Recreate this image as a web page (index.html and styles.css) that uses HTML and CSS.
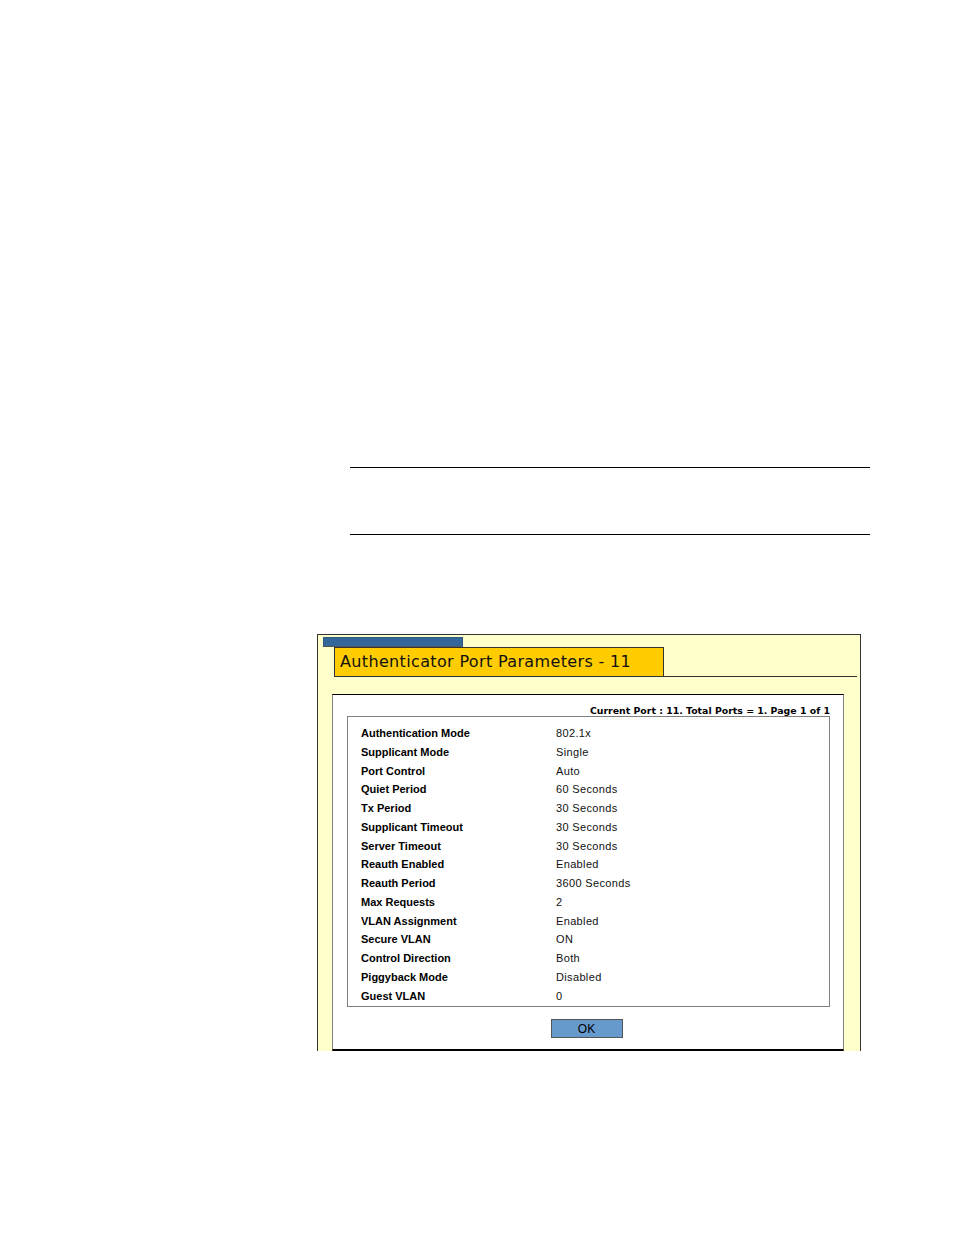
FILE: index.html
```html
<!DOCTYPE html>
<html>
<head>
<meta charset="utf-8">
<link rel="stylesheet" href="styles.css">
</head>
<body>
<div class="rules">
  <div class="rule-box"></div>
</div>
<div class="frame">
  <div class="tab"></div>
  <div class="header">
    <div class="title">Authenticator Port Parameters - 11</div>
  </div>
  <div class="panel">
    <div class="status">Current Port : 11. Total Ports = 1. Page 1 of 1</div>
    <div class="params">
      <div class="row"><span class="label">Authentication Mode</span><span class="value">802.1x</span></div>
      <div class="row"><span class="label">Supplicant Mode</span><span class="value">Single</span></div>
      <div class="row"><span class="label">Port Control</span><span class="value">Auto</span></div>
      <div class="row"><span class="label">Quiet Period</span><span class="value">60 Seconds</span></div>
      <div class="row"><span class="label">Tx Period</span><span class="value">30 Seconds</span></div>
      <div class="row"><span class="label">Supplicant Timeout</span><span class="value">30 Seconds</span></div>
      <div class="row"><span class="label">Server Timeout</span><span class="value">30 Seconds</span></div>
      <div class="row"><span class="label">Reauth Enabled</span><span class="value">Enabled</span></div>
      <div class="row"><span class="label">Reauth Period</span><span class="value">3600 Seconds</span></div>
      <div class="row"><span class="label">Max Requests</span><span class="value">2</span></div>
      <div class="row"><span class="label">VLAN Assignment</span><span class="value">Enabled</span></div>
      <div class="row"><span class="label">Secure VLAN</span><span class="value">ON</span></div>
      <div class="row"><span class="label">Control Direction</span><span class="value">Both</span></div>
      <div class="row"><span class="label">Piggyback Mode</span><span class="value">Disabled</span></div>
      <div class="row"><span class="label">Guest VLAN</span><span class="value">0</span></div>
    </div>
    <div class="actions"><button class="ok">OK</button></div>
  </div>
</div>
</body>
</html>
```

FILE: styles.css
```css
html, body {
  margin: 0;
  padding: 0;
  background: #ffffff;
}
body {
  font-family: "Liberation Sans", Arial, sans-serif;
  color: #000;
}
.rules {
  padding-top: 467px;
  margin-left: 350px;
  width: 520px;
}
.rule-box {
  border-top: 1px solid #000;
  border-bottom: 1px solid #000;
  height: 66px;
}
.frame {
  margin-top: 99px;
  margin-left: 317px;
  width: 542px;
  border: 1px solid #333;
  border-bottom: none;
  background: #ffffcc;
  display: flex;
  flex-direction: column;
}
.tab {
  margin-top: 2px;
  margin-left: 5px;
  width: 140px;
  height: 10px;
  background: #336699;
  box-sizing: border-box;
  border: 1px solid #2d5a86;
  border-bottom-color: #555;
}
.header {
  margin-left: 16px;
  width: 523px;
  border-bottom: 1px solid #333;
  display: flex;
}
.title {
  box-sizing: border-box;
  width: 330px;
  height: 29px;
  background: #ffcc00;
  border: 1px solid #333;
  border-bottom: none;
  font-family: "DejaVu Sans", Verdana, sans-serif;
  font-size: 16px;
  letter-spacing: 0.35px;
  line-height: 28px;
  padding-left: 5px;
  color: #111;
}
.panel {
  position: relative;
  margin-top: 17px;
  margin-left: 14px;
  width: 512px;
  box-sizing: border-box;
  background: #ffffff;
  border-top: 1px solid #000;
  border-left: 1px solid #808080;
  border-right: 1px solid #808080;
  border-bottom: 2px solid #000;
  display: flex;
  flex-direction: column;
}
.panel::after {
  content: "";
  position: absolute;
  left: 264px;
  bottom: -4px;
  width: 1px;
  height: 2px;
  background: #333;
}
.status {
  padding-top: 10px;
  line-height: 11px;
  height: 11px;
  padding-right: 13px;
  text-align: right;
  font-family: "DejaVu Sans", Verdana, sans-serif;
  font-weight: bold;
  font-size: 9.4px;
}
.params {
  margin-left: 14px;
  width: 483px;
  box-sizing: border-box;
  border: 1px solid #808080;
  padding: 7px 0 0 13px;
  height: 291px;
}
.row {
  display: flex;
  height: 18.75px;
  line-height: 18.75px;
  font-size: 11px;
}
.label {
  width: 195px;
  font-weight: bold;
  color: #000;
}
.value {
  letter-spacing: 0.35px;
  color: #111;
}
.actions {
  display: flex;
  justify-content: center;
  padding-top: 12px;
  padding-bottom: 11px;
}
.ok {
  margin: 0 0 0 -3px;
  width: 72px;
  height: 19px;
  padding: 0;
  background: #6699cc;
  border: 1px solid #555;
  font-family: "Liberation Sans", Arial, sans-serif;
  font-size: 12px;
  color: #000;
  line-height: 16px;
}
```
